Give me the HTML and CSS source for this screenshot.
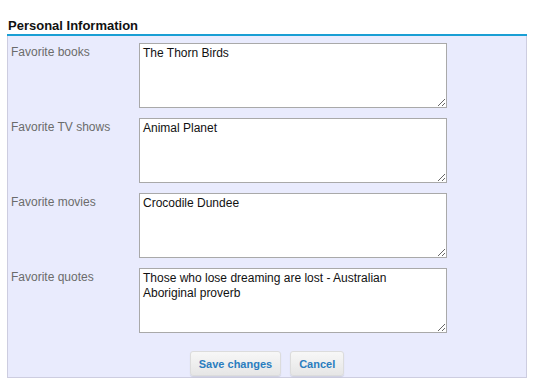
FILE: index.html
```html
<!DOCTYPE html>
<html lang="en">
<head>
  <meta charset="UTF-8" />
  <title>Personal Information</title>
  <link rel="stylesheet" href="styles.css">
</head>
<body>
  <div class="section">
    <h2 class="section-title">Personal Information</h2>
    <form class="panel">
      <div class="row">
        <label class="label" for="books">Favorite books</label>
        <textarea id="books" class="field">The Thorn Birds</textarea>
      </div>
      <div class="row">
        <label class="label" for="tv">Favorite TV shows</label>
        <textarea id="tv" class="field">Animal Planet</textarea>
      </div>
      <div class="row">
        <label class="label" for="movies">Favorite movies</label>
        <textarea id="movies" class="field">Crocodile Dundee</textarea>
      </div>
      <div class="row">
        <label class="label" for="quotes">Favorite quotes</label>
        <textarea id="quotes" class="field">Those who lose dreaming are lost - Australian
Aboriginal proverb</textarea>
      </div>
      <div class="actions">
        <button type="button" class="btn">Save changes</button>
        <button type="button" class="btn">Cancel</button>
      </div>
    </form>
  </div>
</body>
</html>
```

FILE: styles.css
```css
* {
  margin: 0;
  padding: 0;
  box-sizing: border-box;
}

body {
  background: #fff;
  font-family: 'Liberation Sans', Arial, sans-serif;
  color: #111;
}

.section {
  width: 520px;
  margin: 18px 0 0 7px;
}

.section-title {
  font-size: 13px;
  font-weight: bold;
  line-height: 15px;
  padding: 0 0 1px 1px;
  color: #111;
  border-bottom: 2px solid #1a9fd4;
}

.panel {
  background: #e9ebfd;
  border: 1px solid #cdcde0;
  border-top: 0;
  padding: 7px 0 0 3px;
  height: 342px;
}

.row {
  display: flex;
  margin-bottom: 10px;
}

.label {
  width: 128px;
  font-size: 12px;
  color: #6b6b6b;
  padding-top: 2px;
}

.field {
  width: 308px;
  height: 65px;
  border: 1px solid #a9a9a9;
  background: #fff;
  font-family: 'Liberation Sans', Arial, sans-serif;
  font-size: 12px;
  line-height: 15px;
  color: #111;
  padding: 2px 3px;
}

.actions {
  display: flex;
  justify-content: center;
  gap: 9px;
  padding: 8px 0 0 0;
  margin-left: -3px;
}

.btn {
  height: 25px;
  padding: 0 8px;
  background: linear-gradient(#f7f7f7, #e6e6e6);
  border: 1px solid #dcdcdc;
  border-radius: 3px;
  box-shadow: 0 1px 1px rgba(0, 0, 0, 0.12);
  color: #2a7dbf;
  font-family: 'Liberation Sans', Arial, sans-serif;
  font-size: 11px;
  font-weight: bold;
  cursor: pointer;
}
```
